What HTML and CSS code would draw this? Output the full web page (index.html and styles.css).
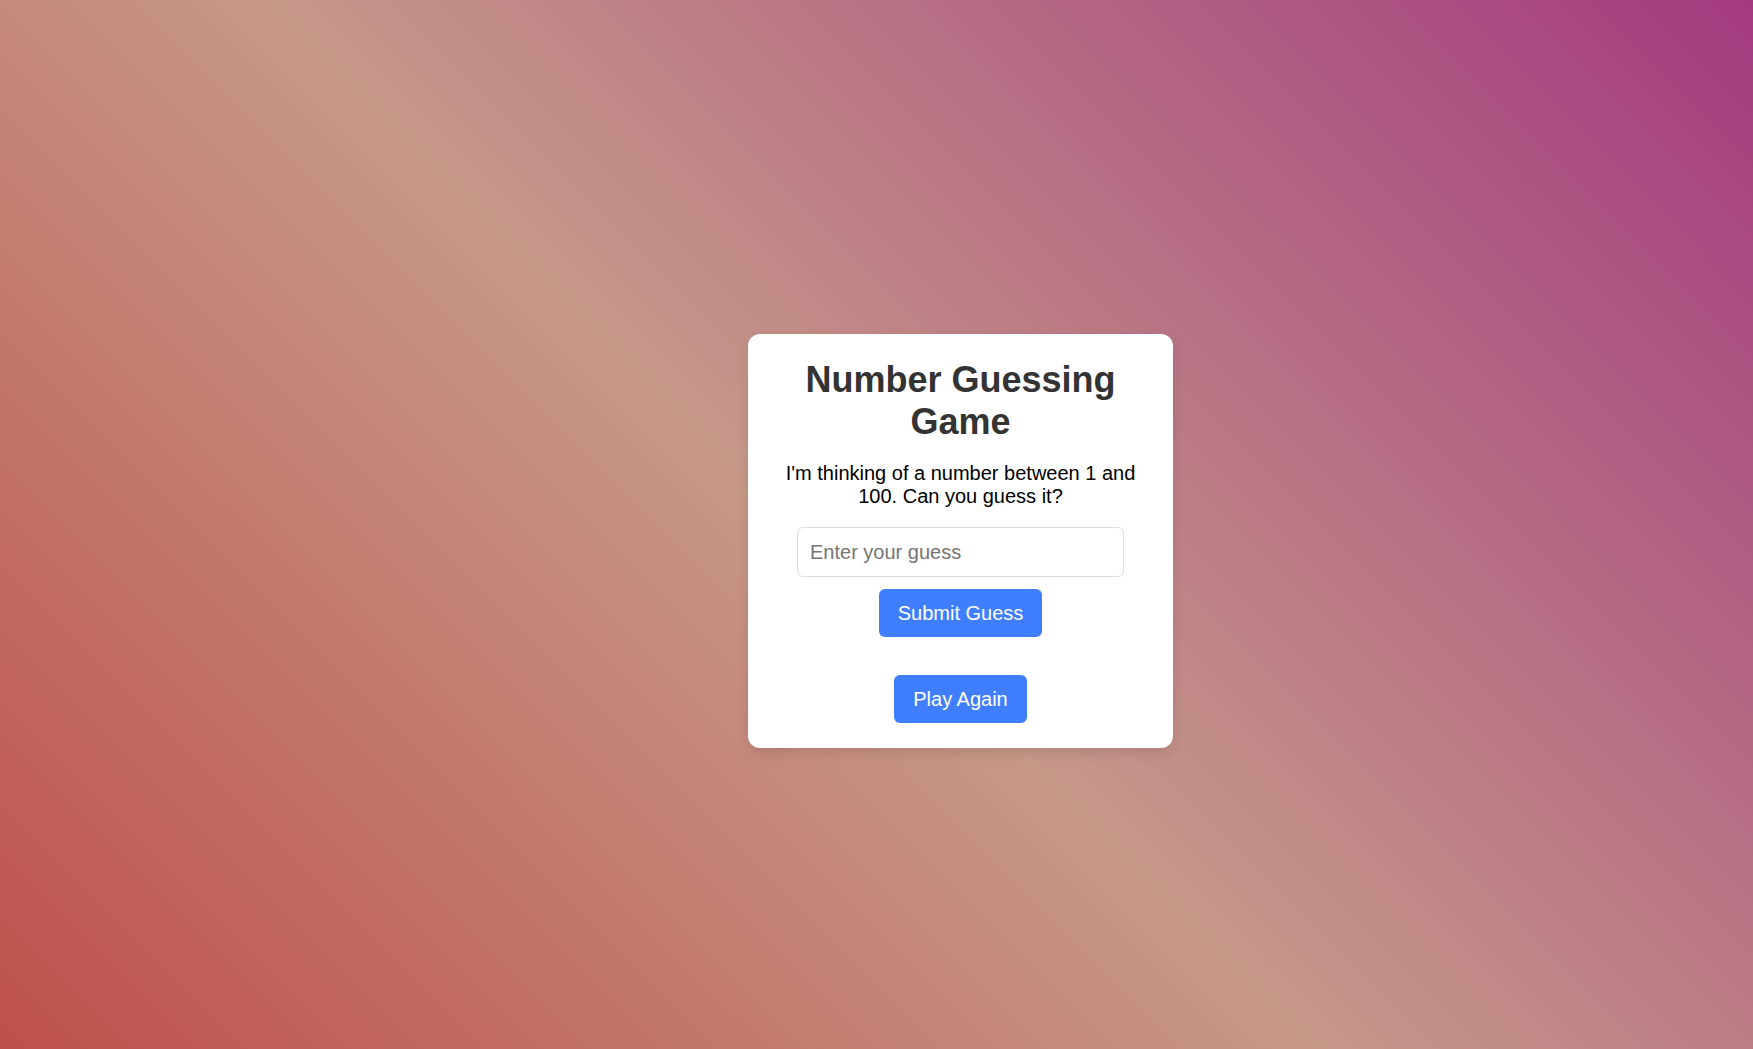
FILE: index.html
```html
<!DOCTYPE html>
<html lang="en">
<head>
<meta charset="utf-8">
<meta name="viewport" content="width=device-width, initial-scale=1">
<title>Number Guessing Game</title>
<link rel="stylesheet" href="styles.css">
</head>
<body class="page">
<main class="card">
<h1 class="card-title">Number Guessing Game</h1>
<p class="card-text">I'm thinking of a number between 1 and 100. Can you guess it?</p>
<form class="guess-form">
<input class="guess-input" type="text" inputmode="numeric" placeholder="Enter your guess" aria-label="Enter your guess">
<button class="button" type="button">Submit Guess</button>
</form>
<button class="button" type="button">Play Again</button>
</main>
</body>
</html>
```

FILE: styles.css
```css
* {
  box-sizing: border-box;
}

.page {
  display: flex;
  align-items: center;
  justify-content: center;
  min-height: 100vh;
  margin: 0;
  padding: 33px 0 0 168px;
  font-family: "Liberation Sans", Arial, sans-serif;
  font-size: 20px;
  line-height: 23px;
  color: #000;
  background: linear-gradient(45deg, #be504b 0%, #c69888 47%, #a33a7f 100%);
}

.card {
  display: flex;
  flex-direction: column;
  align-items: center;
  width: 100%;
  max-width: 425px;
  padding: 25px;
  border-radius: 12px;
  background: #fff;
  box-shadow: 0 5px 12px rgba(0, 0, 0, 0.1);
  text-align: center;
}

.card-title {
  margin: 0 0 19px;
  font-size: 36px;
  line-height: 42px;
  color: #333;
}

.card-text {
  margin: 0 0 19px;
}

.guess-form {
  display: flex;
  flex-direction: column;
  align-items: center;
  gap: 12px;
  width: 100%;
  margin-bottom: 38px;
}

.guess-input {
  width: 100%;
  max-width: 327px;
  height: 50px;
  padding: 12px;
  border: 1px solid #ddd;
  border-radius: 6px;
  font: inherit;
  background: #fff;
}

.guess-input::placeholder {
  color: #757575;
}

.button {
  height: 48px;
  padding: 0 19px;
  border: 0;
  border-radius: 6px;
  font: inherit;
  color: #fff;
  background: #3f7fff;
  cursor: pointer;
}
```
